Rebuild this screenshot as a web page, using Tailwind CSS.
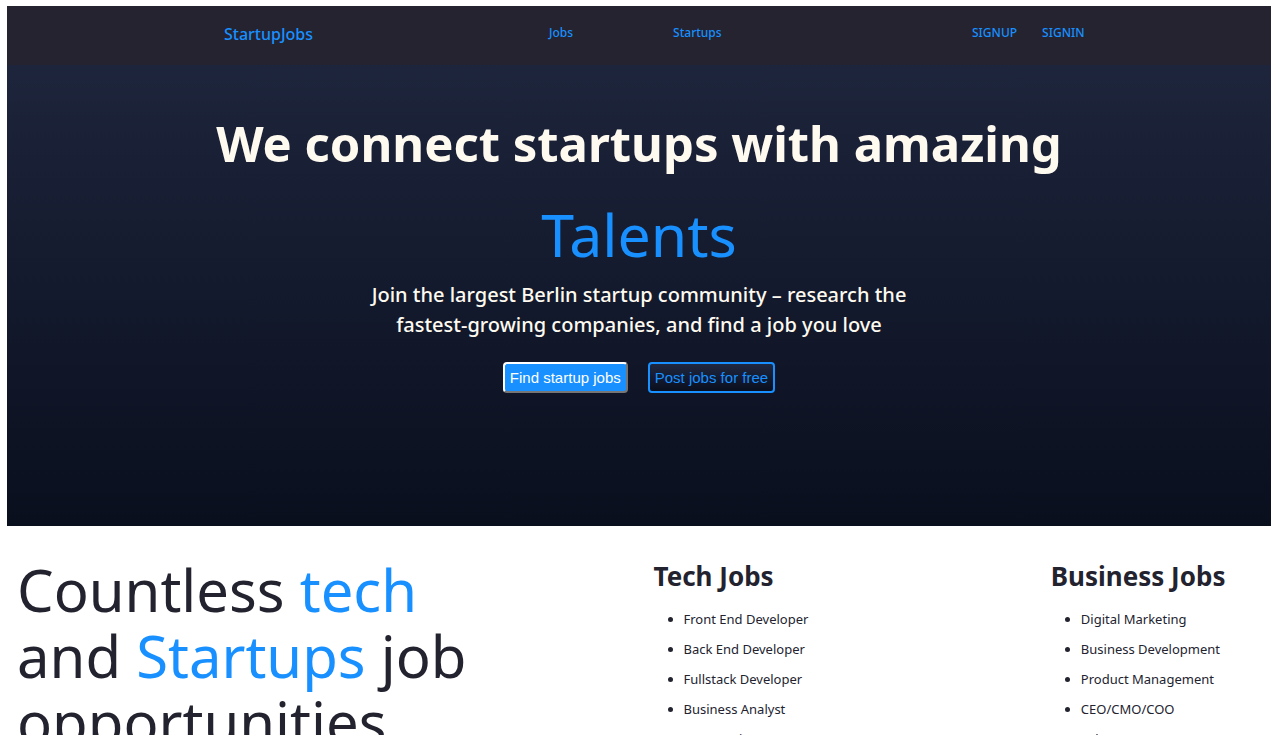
<!DOCTYPE html>
<html lang="en">
<head>
<meta charset="utf-8">
<meta name="viewport" content="width=device-width, initial-scale=1">
<title>StartupJobs</title>
<script src="https://cdn.jsdelivr.net/npm/@tailwindcss/browser@4"></script>
</head>
<body class="bg-white pt-[6px] pr-2 pl-[7px] font-['Noto_Sans','Open_Sans',sans-serif] text-[#232330]">
<header class="bg-linear-to-b from-[#202840] to-[#0a0f1e] pb-[133px] text-[#fffaf0]">
  <nav class="grid grid-cols-[217fr_325fr_423fr_299fr] bg-[#24232f] pt-4 pb-[19px] text-xs leading-[22px] font-medium text-[#1890ff]">
    <span></span>
    <a href="#" class="text-base leading-6">StartupJobs</a>
    <div class="flex gap-[100px]">
      <a href="#">Jobs</a>
      <a href="#">Startups</a>
    </div>
    <div class="flex gap-[25px]">
      <a href="#">SIGNUP</a>
      <a href="#">SIGNIN</a>
    </div>
  </nav>
  <div class="flex flex-col items-center pt-11 text-center">
    <h1 class="text-[49px] leading-[68px] font-bold">We connect startups with amazing</h1>
    <p class="mt-[23px] text-[59px] leading-[68px] text-[#1890ff]">Talents</p>
    <p class="mt-3 text-xl leading-[30px] font-medium">Join the largest Berlin startup community – research the<br>fastest-growing companies, and find a job you love</p>
    <div class="mt-[22px] flex gap-5 font-['Liberation_Sans',sans-serif] text-[15px] leading-[17px]">
      <button type="button" class="rounded-[4px] border-2 border-t-white border-r-[#767676] border-b-[#767676] border-l-white bg-[#1890ff] p-[5px] text-white">Find startup jobs</button>
      <button type="button" class="rounded-[4px] border-2 border-[#1890ff] bg-linear-to-b from-[#202840] to-[#0a0f1e] p-[5px] text-[#1890ff]">Post jobs for free</button>
    </div>
  </div>
</header>
<main class="grid grid-cols-[636fr_397fr_220fr] pt-[31px] pl-[10px]">
  <h2 class="text-[58px] leading-[66px]">Countless <span class="text-[#1890ff]">tech</span><br>and <span class="text-[#1890ff]">Startups</span> job<br>opportunities</h2>
  <section>
    <h3 class="text-[26px] leading-[38px] font-bold">Tech Jobs</h3>
    <ul class="mt-[9px] list-disc pl-[30px] text-[13px] leading-[30px]">
      <li>Front End Developer</li>
      <li>Back End Developer</li>
      <li>Fullstack Developer</li>
      <li>Business Analyst</li>
      <li>Data Engineer</li>
    </ul>
  </section>
  <section>
    <h3 class="text-[26px] leading-[38px] font-bold">Business Jobs</h3>
    <ul class="mt-[9px] list-disc pl-[30px] text-[13px] leading-[30px]">
      <li>Digital Marketing</li>
      <li>Business Development</li>
      <li>Product Management</li>
      <li>CEO/CMO/COO</li>
      <li>Sales</li>
    </ul>
  </section>
</main>
</body>
</html>
